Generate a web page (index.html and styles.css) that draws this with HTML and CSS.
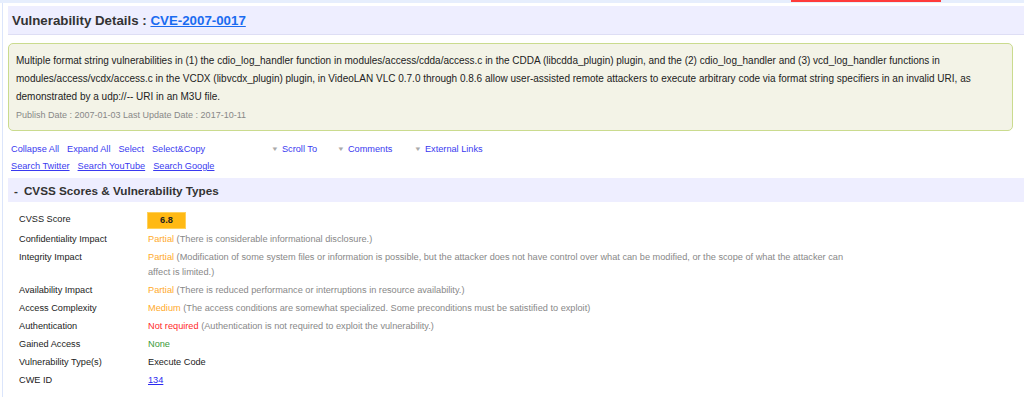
FILE: index.html
```html
<!DOCTYPE html>
<html>
<head>
<meta charset="utf-8">
<link rel="stylesheet" href="styles.css">
</head>
<body>
<div class="topstrip"><div class="topstrip-mark"></div></div>
<div class="page">
  <div class="pagehead">
    <h1 class="title">Vulnerability Details : <a href="#" class="cve-link">CVE-2007-0017</a></h1>
  </div>
  <div class="summary">
    <p class="summary-text">Multiple format string vulnerabilities in (1) the cdio_log_handler function in modules/access/cdda/access.c in the CDDA (libcdda_plugin) plugin, and the (2) cdio_log_handler and (3) vcd_log_handler functions in modules/access/vcdx/access.c in the VCDX (libvcdx_plugin) plugin, in VideoLAN VLC 0.7.0 through 0.8.6 allow user-assisted remote attackers to execute arbitrary code via format string specifiers in an invalid URI, as demonstrated by a udp://-- URI in an M3U file.</p>
    <p class="summary-dates">Publish Date : 2007-01-03 Last Update Date : 2017-10-11</p>
  </div>
  <div class="toolbar">
    <div class="toolbar-row">
      <div class="toolbar-links">
        <a href="#" class="tlink">Collapse All</a>
        <a href="#" class="tlink">Expand All</a>
        <a href="#" class="tlink">Select</a>
        <a href="#" class="tlink">Select&amp;Copy</a>
      </div>
      <div class="dd dd-scroll"><span class="tri">&#9660;</span><a href="#" class="tlink">Scroll To</a></div>
      <div class="dd dd-comments"><span class="tri">&#9660;</span><a href="#" class="tlink">Comments</a></div>
      <div class="dd"><span class="tri">&#9660;</span><a href="#" class="tlink">External Links</a></div>
    </div>
    <div class="toolbar-row">
      <a href="#" class="tlink ul">Search Twitter</a>
      <a href="#" class="tlink ul">Search YouTube</a>
      <a href="#" class="tlink ul">Search Google</a>
    </div>
  </div>
  <div class="section-head"><span class="collapse-mark">-</span>CVSS Scores &amp; Vulnerability Types</div>
  <table class="details">
    <tr><th>CVSS Score</th><td><span class="score">6.8</span></td></tr>
    <tr><th>Confidentiality Impact</th><td><span class="warn">Partial</span> <span class="desc">(There is considerable informational disclosure.)</span></td></tr>
    <tr><th>Integrity Impact</th><td><span class="warn">Partial</span> <span class="desc">(Modification of some system files or information is possible, but the attacker does not have control over what can be modified, or the scope of what the attacker can affect is limited.)</span></td></tr>
    <tr><th>Availability Impact</th><td><span class="warn">Partial</span> <span class="desc">(There is reduced performance or interruptions in resource availability.)</span></td></tr>
    <tr><th>Access Complexity</th><td><span class="warn">Medium</span> <span class="desc">(The access conditions are somewhat specialized. Some preconditions must be satistified to exploit)</span></td></tr>
    <tr><th>Authentication</th><td><span class="bad">Not required</span> <span class="desc">(Authentication is not required to exploit the vulnerability.)</span></td></tr>
    <tr><th>Gained Access</th><td><span class="good">None</span></td></tr>
    <tr><th>Vulnerability Type(s)</th><td>Execute Code</td></tr>
    <tr><th>CWE ID</th><td><a href="#" class="cwe">134</a></td></tr>
  </table>
</div>
</body>
</html>
```
FILE: styles.css
```css
html, body {
  margin: 0;
  padding: 0;
  background: #ffffff;
}
body {
  font-family: "Liberation Sans", Arial, sans-serif;
  color: #333;
  overflow: hidden;
}
.topstrip {
  height: 3px;
  background: #e6eefd;
  display: flex;
}
.topstrip-mark {
  margin-left: 791px;
  width: 150px;
  height: 2px;
  background: #ff3b3b;
}
.page {
  margin-left: 2px;
  border-left: 1px solid #dbe5fb;
  padding-left: 5px;
  padding-top: 3px;
  min-height: 400px;
}
.pagehead {
  background: #eeeeff;
  border-bottom: 1px solid #dedef5;
  height: 28px;
  display: flex;
  align-items: center;
  padding-left: 4px;
}
.title {
  margin: 0;
  font-size: 13.3px;
  font-weight: bold;
  color: #333;
}
.cve-link {
  color: #1a6bf0;
  text-decoration: underline;
}
.summary {
  margin: 8px 11px 0 0;
  background: #f3f3e7;
  border: 1px solid #cadb8e;
  border-radius: 5px;
  padding: 8px 40px 5px 7px;
}
.summary-text {
  margin: 0;
  font-size: 10px;
  line-height: 18px;
  color: #222;
}
.summary-dates {
  margin: 0;
  font-size: 9px;
  line-height: 19px;
  color: #888;
}
.toolbar {
  margin-top: 9px;
  padding-left: 3px;
}
.toolbar-row {
  display: flex;
  align-items: center;
  gap: 8px;
  height: 17px;
  font-size: 9.2px;
}
.toolbar-links {
  display: flex;
  gap: 8px;
  width: 253px;
}
.tlink {
  color: #3a3af0;
  text-decoration: none;
}
.tlink.ul {
  text-decoration: underline;
}
.dd {
  display: flex;
  align-items: center;
  gap: 3px;
}
.dd-scroll {
  width: 58px;
}
.dd-comments {
  width: 69px;
}
.tri {
  color: #aaa;
  font-size: 6px;
  display: inline-block;
  transform: scaleX(1.3);
  margin-right: 1px;
}
.section-head {
  margin-top: 4px;
  background: #eeeeff;
  height: 24px;
  display: flex;
  align-items: center;
  padding-left: 6px;
  font-size: 11.7px;
  font-weight: bold;
  color: #333;
}
.collapse-mark {
  margin-right: 6px;
}
.details {
  margin: 8px 0 0 7px;
  border-collapse: collapse;
  font-size: 9.2px;
}
.details th {
  text-align: left;
  font-weight: normal;
  color: #222;
  width: 125px;
  padding: 1.5px 4px;
  line-height: 15px;
  vertical-align: top;
}
.details td {
  padding: 1.5px 4px 1.5px 0;
  line-height: 15px;
  width: 700px;
  color: #222;
  vertical-align: top;
}
.score {
  display: inline-block;
  width: 37px;
  height: 15px;
  line-height: 15px;
  background: #ffb914;
  border: 1px solid #ffd15a;
  text-align: center;
  font-weight: bold;
  color: #222;
  margin-left: -1px;
}
.warn {
  color: #ffaa2a;
}
.bad {
  color: #ff2a2a;
}
.good {
  color: #3a9a3a;
}
.desc {
  color: #888;
}
.cwe {
  color: #2a2af0;
  text-decoration: underline;
}
```
